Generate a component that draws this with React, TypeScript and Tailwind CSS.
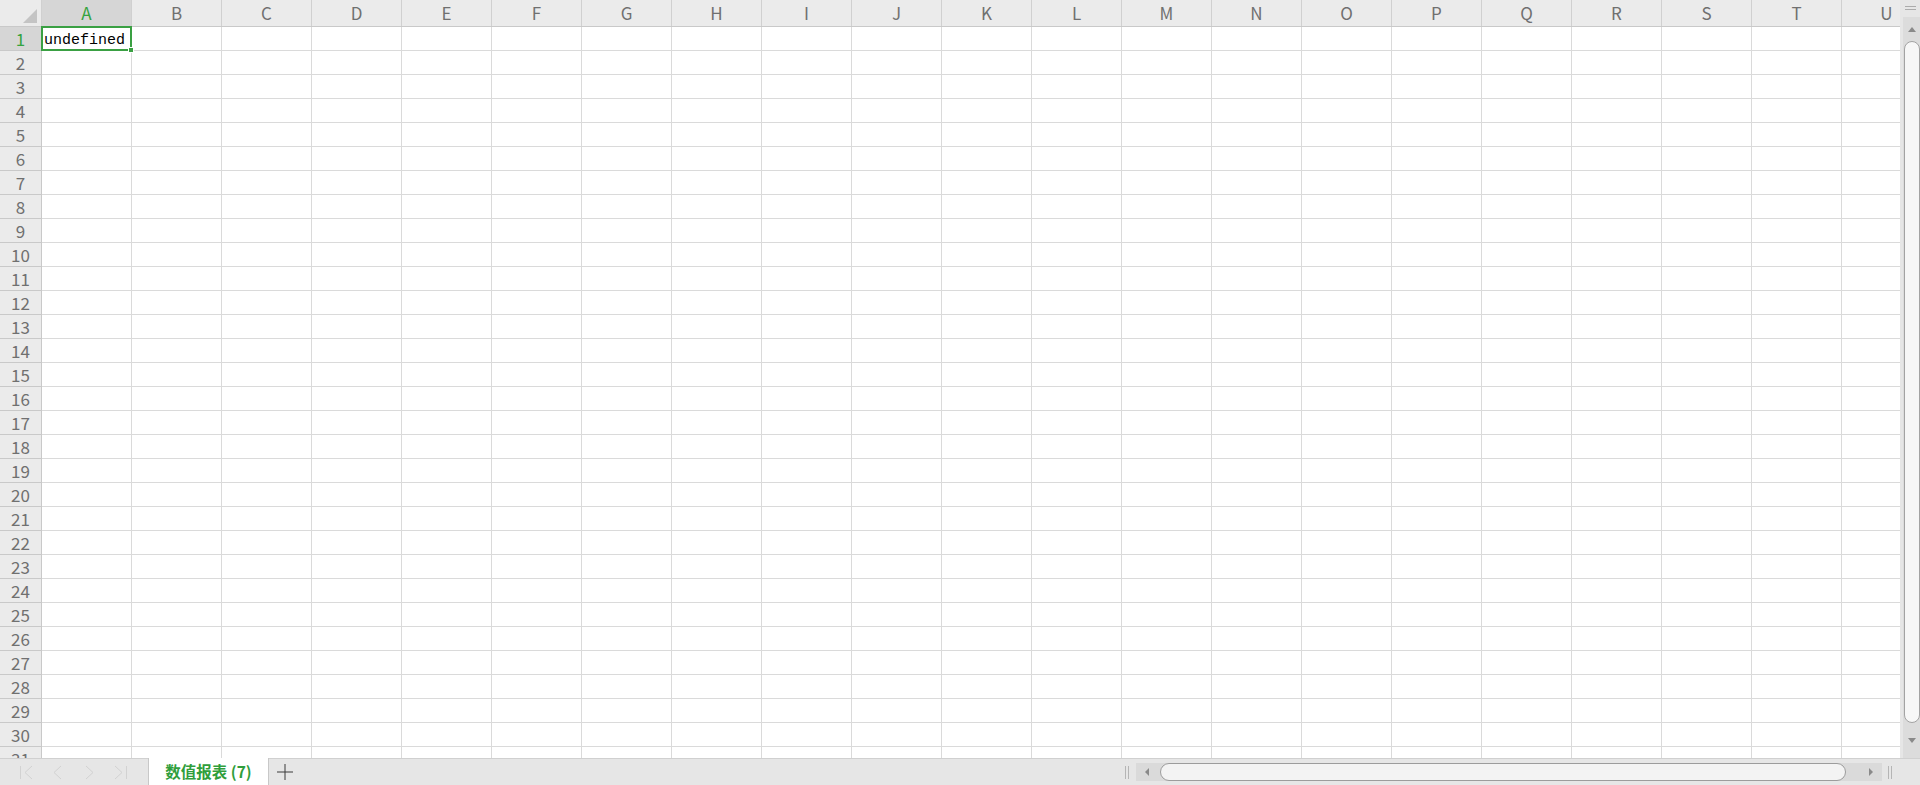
import React from "react";

const COLS = "ABCDEFGHIJKLMNOPQRSTU".split("");
const ROWS = Array.from({ length: 32 }, (_, i) => i + 1);

function NavArrows() {
  return (
    <svg width="148" height="26" viewBox="0 0 148 26" className="shrink-0">
      <g stroke="#d2d2d2" strokeWidth="1" fill="none">
        <line x1="20.5" y1="7" x2="20.5" y2="20" />
        <polyline points="32,7 25,13.5 32,20" />
        <polyline points="61,7 54,13.5 61,20" />
        <polyline points="86,7 93,13.5 86,20" />
        <polyline points="115,7 122,13.5 115,20" />
        <line x1="126.5" y1="7" x2="126.5" y2="20" />
      </g>
    </svg>
  );
}

function Grip({ vertical }: { vertical?: boolean }) {
  if (vertical) {
    return (
      <div className="flex flex-col gap-[2px] w-[11px]">
        <div className="h-px bg-[#ababab]" />
        <div className="h-px bg-[#ababab]" />
      </div>
    );
  }
  return (
    <div className="flex gap-[2px] h-[13px]">
      <div className="w-px bg-[#b5b5b5]" />
      <div className="w-px bg-[#b5b5b5]" />
    </div>
  );
}

export default function App() {
  return (
    <div className="w-[1920px] h-[785px] flex flex-col overflow-hidden bg-white font-['Noto_Sans_CJK_SC','Noto_Sans',sans-serif]">
      <div className="flex h-[758px] shrink-0">
        <div className="relative flex-1 overflow-hidden">
          {/* header */}
          <div className="flex h-[27px] border-b border-[#c9c9c9] bg-[#ebebeb]">
            <div className="relative w-[42px] shrink-0 border-r border-[#d0d0d0]">
              <svg width="14" height="14" className="absolute right-[4px] bottom-[3px]">
                <polygon points="14,0 14,14 0,14" fill="#c4c4c4" />
              </svg>
            </div>
            {COLS.map((c) => (
              <div
                key={c}
                className={
                  c === "A"
                    ? "w-[90px] shrink-0 border-r border-[#d0d0d0] flex items-center justify-center text-[17px] text-[#34a340] bg-[#d6d6d6]"
                    : "w-[90px] shrink-0 border-r border-[#d0d0d0] flex items-center justify-center text-[17px] text-[#707070]"
                }
              >
                {c}
              </div>
            ))}
          </div>
          {ROWS.map((r) => (
            <div key={r} className="flex h-[24px]">
              <div
                className={
                  r === 1
                    ? "w-[42px] shrink-0 border-r border-b border-[#c9c9c9] bg-[#d6d6d6] flex items-center justify-center text-[17px] text-[#34a340]"
                    : "w-[42px] shrink-0 border-r border-b border-[#c9c9c9] bg-[#ebebeb] flex items-center justify-center text-[17px] text-[#707070]"
                }
              >
                {r}
              </div>
              {COLS.map((c) => (
                <div
                  key={c}
                  className="w-[90px] shrink-0 border-r border-b border-[#dadada] flex items-center overflow-visible whitespace-nowrap"
                >
                  {r === 1 && c === "A" ? (
                    <span className="pl-[2px] pt-[5px] text-[15px] leading-[18px] text-black font-['Liberation_Mono',monospace]">
                      undefined
                    </span>
                  ) : null}
                </div>
              ))}
            </div>
          ))}
          {/* selection */}
          <div className="absolute left-[41px] top-[26px] w-[91px] h-[25px] border-2 border-[#3aa043] pointer-events-none" />
          <div className="absolute left-[128px] top-[47px] w-[6px] h-[6px] bg-[#3aa043] border border-white" />
        </div>
        {/* vertical scrollbar */}
        <div className="w-[20px] shrink-0 bg-[#e6e6e6] flex flex-col">
          <div className="h-[17px] flex items-start justify-center pt-[6px] pl-[1px]">
            <Grip vertical />
          </div>
          <div className="flex-1 ml-[3px] bg-[#dcdcdc] flex flex-col items-center">
            <div className="h-[24px] flex items-center justify-center">
              <svg width="8" height="5">
                <polygon points="4,0 8,5 0,5" fill="#8a8a8a" />
              </svg>
            </div>
            <div className="w-[16px] h-[682px] bg-[#f7f7f7] border border-[#a3a3a3] rounded-full" />
            <div className="flex-1 flex items-center justify-center">
              <svg width="8" height="5">
                <polygon points="0,0 8,0 4,5" fill="#8a8a8a" />
              </svg>
            </div>
          </div>
        </div>
      </div>
      {/* tab bar */}
      <div className="h-[27px] shrink-0 flex bg-[#e6e6e6] border-t border-[#d0d0d0]">
        <NavArrows />
        <div className="w-[121px] shrink-0 -mt-px h-[27px] bg-white border-x border-[#c8c8c8] flex items-center justify-center text-[15.5px] font-bold text-[#2f9e3b]">
          数值报表 (7)
        </div>
        <div className="w-[32px] flex items-center justify-center">
          <svg width="16" height="16">
            <line x1="8" y1="0" x2="8" y2="16" stroke="#3a3a3a" strokeWidth="1" />
            <line x1="0" y1="8" x2="16" y2="8" stroke="#3a3a3a" strokeWidth="1" />
          </svg>
        </div>
        <div className="flex-1" />
        <div className="flex items-center pr-[28px]">
          <Grip />
          <div className="ml-[7px] w-[746px] h-[18px] bg-[#dadada] flex items-center">
            <svg width="24" height="18" className="shrink-0">
              <polygon points="9,9 13,5 13,13" fill="#8a8a8a" />
            </svg>
            <div className="w-[686px] h-[18px] bg-[#f3f3f3] border border-[#9c9c9c] rounded-full shrink-0" />
            <svg width="36" height="18" className="shrink-0">
              <polygon points="23,5 27,9 23,13" fill="#8a8a8a" />
            </svg>
          </div>
          <div className="ml-[6px]">
            <Grip />
          </div>
        </div>
      </div>
    </div>
  );
}
